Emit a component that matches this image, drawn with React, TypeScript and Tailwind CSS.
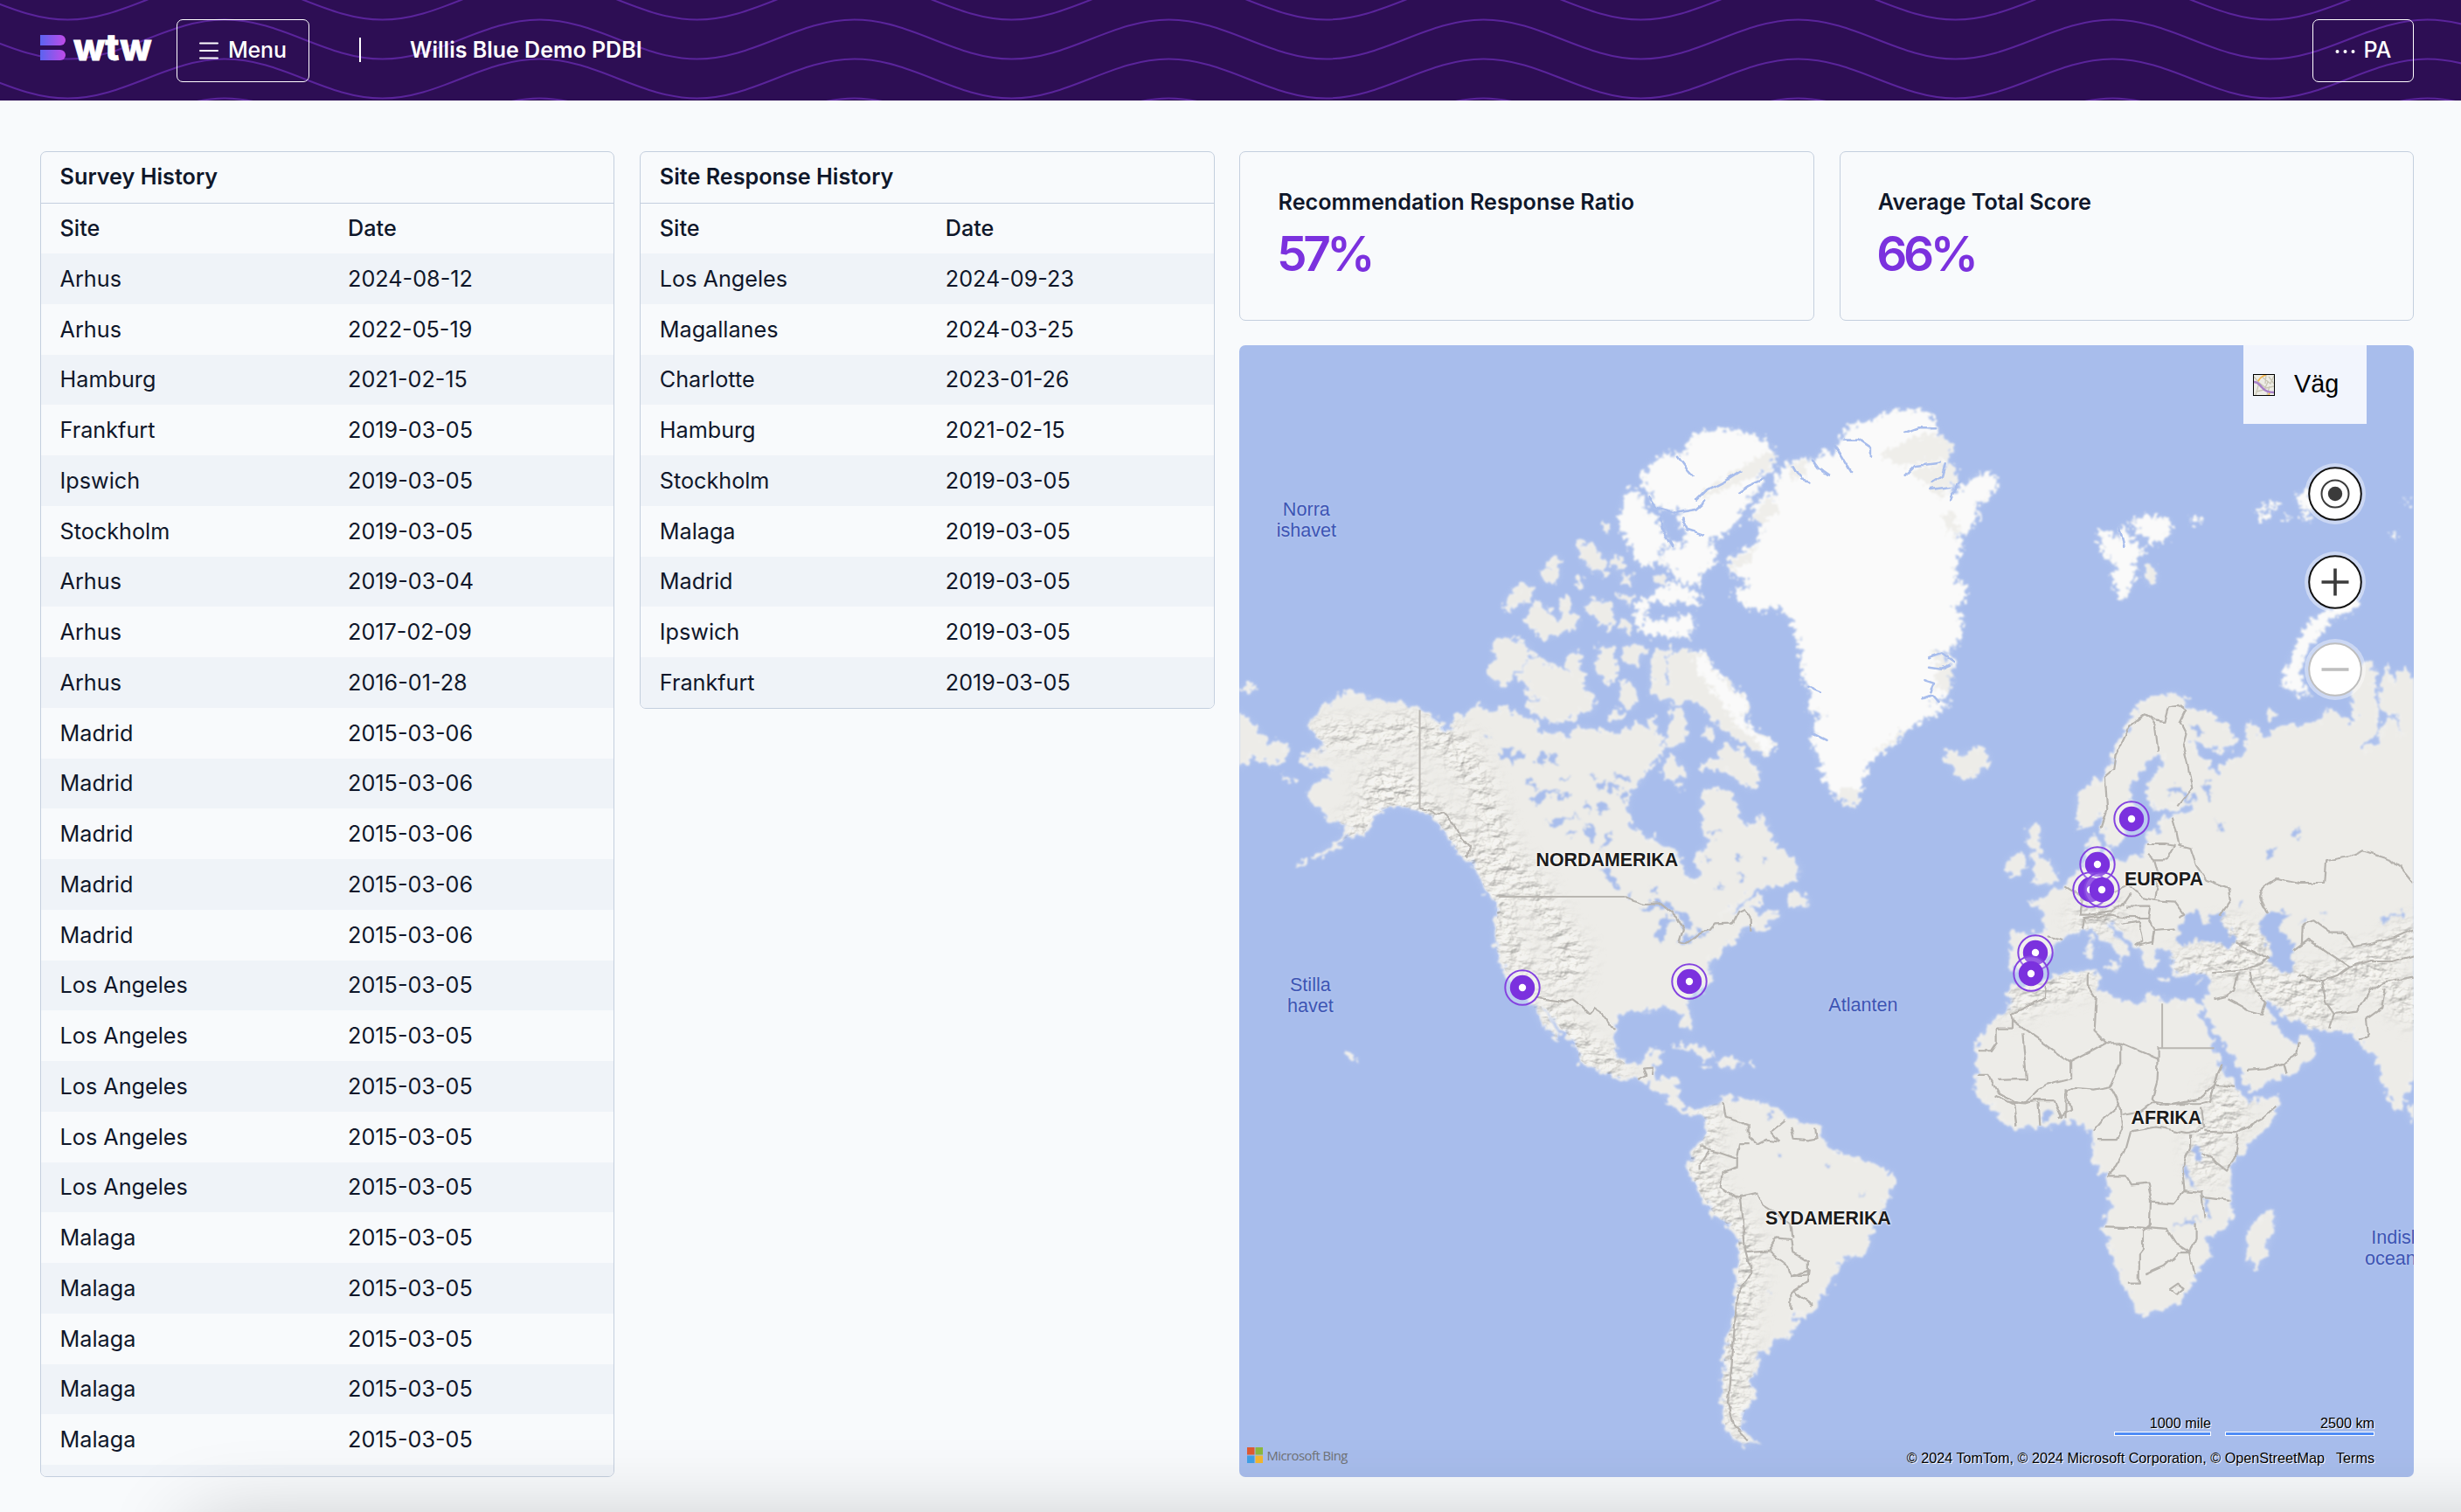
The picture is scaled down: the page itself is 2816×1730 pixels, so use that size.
import { useId, type ReactNode } from "react";

/* ---------- data ---------- */

type Row = [site: string, date: string];

const surveys: Row[] = [
  ["Arhus", "2024-08-12"],
  ["Arhus", "2022-05-19"],
  ["Hamburg", "2021-02-15"],
  ["Frankfurt", "2019-03-05"],
  ["Ipswich", "2019-03-05"],
  ["Stockholm", "2019-03-05"],
  ["Arhus", "2019-03-04"],
  ["Arhus", "2017-02-09"],
  ["Arhus", "2016-01-28"],
  ["Madrid", "2015-03-06"],
  ["Madrid", "2015-03-06"],
  ["Madrid", "2015-03-06"],
  ["Madrid", "2015-03-06"],
  ["Madrid", "2015-03-06"],
  ["Los Angeles", "2015-03-05"],
  ["Los Angeles", "2015-03-05"],
  ["Los Angeles", "2015-03-05"],
  ["Los Angeles", "2015-03-05"],
  ["Los Angeles", "2015-03-05"],
  ["Malaga", "2015-03-05"],
  ["Malaga", "2015-03-05"],
  ["Malaga", "2015-03-05"],
  ["Malaga", "2015-03-05"],
  ["Malaga", "2015-03-05"],
  ["", ""],
];

const responses: Row[] = [
  ["Los Angeles", "2024-09-23"],
  ["Magallanes", "2024-03-25"],
  ["Charlotte", "2023-01-26"],
  ["Hamburg", "2021-02-15"],
  ["Stockholm", "2019-03-05"],
  ["Malaga", "2019-03-05"],
  ["Madrid", "2019-03-05"],
  ["Ipswich", "2019-03-05"],
  ["Frankfurt", "2019-03-05"],
];

/* ---------- map geometry ---------- */

// Each sheet is a survey grid with its own origin and scale.
type Sheet = [ox: number, oy: number, sx: number, sy: number];
const ARCTIC: Sheet = [-18, -15, 2.24, 2.613];
const NORDIC: Sheet = [682, -15, 2.19, 2.613];
const NORTH: Sheet = [-18, 385, 2.24, 3];
const EAST: Sheet = [682, 385, 2.19, 3];
const SOUTH: Sheet = [382, 805, 1.543, 2.958];

function pts(sheet: Sheet, list: string) {
  return list
    .trim()
    .split(/\s+/)
    .map((pair) => {
      const [x, y] = pair.split(",").map(Number);
      return `${(sheet[0] + x / sheet[2]).toFixed(1)},${(sheet[1] + y / sheet[3]).toFixed(1)}`;
    })
    .join(" ");
}

const mainland: string[] = [
  // North and Central America
  pts(
    NORTH,
    "215,145 235,120 250,110 262,75 290,55 320,40 345,40 375,55 420,70 455,75 503,97 530,115 555,140 572,180 582,170 580,140 600,125 630,105 650,85 655,68 668,95 690,108 715,95 745,100 760,120 790,130 805,145 800,165 815,180 850,175 870,180 875,200 890,190 890,165 920,160 965,170 1000,175 1010,185 1030,175 1045,150 1065,140 1075,155 1085,175 1090,145 1100,120 1110,150 1108,175 1120,190 1125,215 1120,240 1110,275 1085,300 1080,320 1065,350 1045,370 1038,400 1035,440 1038,485 1055,510 1065,528 1100,540 1130,570 1160,585 1170,600 1172,640 1190,665 1205,688 1222,665 1220,630 1210,605 1225,580 1245,560 1240,530 1228,500 1235,470 1228,430 1228,380 1245,370 1280,372 1310,400 1318,430 1320,470 1345,500 1365,490 1378,455 1392,480 1395,510 1412,545 1415,575 1440,590 1460,610 1478,640 1475,665 1455,685 1430,695 1395,705 1355,710 1335,740 1310,775 1270,805 1320,785 1350,745 1375,735 1380,755 1350,770 1360,790 1375,805 1395,795 1425,790 1425,810 1400,825 1385,850 1365,855 1360,830 1330,850 1310,870 1310,895 1290,905 1275,915 1268,935 1250,970 1243,940 1240,980 1250,1020 1240,1035 1215,1060 1195,1080 1185,1100 1190,1125 1200,1170 1200,1195 1190,1200 1180,1175 1172,1140 1165,1122 1130,1115 1110,1125 1085,1130 1055,1125 1025,1130 1005,1155 1002,1200 1000,1235 1005,1270 1020,1300 1035,1315 1065,1312 1080,1300 1090,1275 1120,1270 1118,1295 1105,1320 1100,1345 1110,1365 1160,1365 1165,1390 1160,1430 1165,1450 1185,1470 1205,1465 1232,1480 1240,1500 1220,1480 1205,1488 1180,1480 1150,1450 1135,1425 1110,1400 1080,1375 1055,1360 1000,1355 960,1330 925,1310 910,1290 910,1260 890,1220 865,1190 840,1150 825,1115 808,1100 835,1160 850,1195 862,1238 840,1205 820,1180 805,1140 785,1090 750,1040 730,1010 710,960 697,910 698,860 702,800 700,760 690,740 670,710 655,660 635,620 610,600 590,560 570,520 550,480 520,450 490,440 455,425 430,425 405,445 385,460 370,490 360,530 345,515 320,530 290,570 240,600 230,600 280,560 310,530 325,500 300,485 270,480 262,450 240,430 222,410 216,385 240,350 270,330 280,300 270,290 235,298 200,265 210,245 240,235 270,235 250,200 230,175"
  ),
  // Chukotka
  pts(NORTH, "20,95 40,105 75,145 100,190 115,220 140,205 165,225 165,250 145,265 130,290 105,270 75,245 60,280 20,300"),
  // Europe and Asia
  pts(
    EAST,
    "760,80 800,55 850,40 885,60 870,85 900,100 940,110 975,150 1000,190 990,235 960,235 920,210 890,195 905,240 920,270 960,320 970,290 1000,270 1030,240 1035,200 1030,160 1045,140 1060,160 1055,190 1090,190 1100,165 1130,150 1170,150 1215,140 1225,100 1260,110 1300,150 1310,130 1295,70 1300,-20 1325,-70 1350,-50 1352,20 1355,70 1360,130 1360,180 1320,210 1330,230 1360,215 1370,180 1380,130 1400,125 1415,170 1428,180 1410,120 1370,95 1365,40 1375,-20 1385,-53 1395,0 1410,-30 1435,-40 1450,0 1470,0 1470,1360 1440,1360 1432,1420 1410,1475 1395,1440 1370,1370 1360,1290 1340,1275 1320,1245 1300,1200 1250,1200 1190,1190 1170,1165 1130,1150 1100,1110 1082,1085 1075,1100 1090,1150 1110,1190 1120,1220 1150,1245 1165,1240 1168,1210 1185,1225 1208,1250 1190,1300 1130,1350 1040,1405 1028,1375 1020,1330 990,1270 960,1200 935,1150 925,1120 935,1060 945,1010 900,1000 870,1010 845,980 840,925 820,915 800,915 805,950 795,990 775,975 770,940 755,910 735,880 715,850 700,830 680,820 690,850 720,890 735,935 715,960 720,930 690,900 665,880 645,850 620,850 600,860 570,880 545,900 530,950 510,990 480,1005 460,985 438,980 442,900 440,865 490,865 530,870 530,820 515,780 490,755 530,745 545,715 580,700 600,660 620,640 635,600 635,550 655,530 665,560 655,600 700,620 740,605 775,600 780,560 785,520 820,510 810,480 840,460 880,450 905,440 895,410 870,430 840,435 800,435 785,400 785,350 820,290 825,260 800,250 780,285 745,340 735,390 750,430 730,500 720,540 690,565 675,520 670,480 660,450 640,490 610,500 610,450 605,400 640,350 680,320 700,250 725,180 745,120"
  ),
  // Africa
  pts(EAST, "440,1060 450,1040 475,1050 530,1030 580,1000 650,990 660,1020 655,1060 700,1085 760,1115 790,1070 830,1095 900,1100 918,1115 910,1140 935,1200 955,1290 975,1350 1015,1410 1030,1440 1110,1425") +
    " " +
    pts(SOUTH, "1245,190 1235,240 1190,330 1160,400 1160,520 1165,570 1150,610 1115,640 1125,700 1105,740 1090,800 1060,870 1030,885 1005,900 990,880 990,840 965,780 955,700 938,610 950,530 945,440 920,380 918,310 925,280 910,275 880,240 830,265 785,270 760,240 735,190 712,140 715,60 712,0") +
    " " +
    pts(EAST, "355,1290 360,1230 390,1170 420,1150 440,1110 435,1070"),
  // South America
  pts(
    SOUTH,
    "228,215 245,190 262,178 272,160 280,175 295,175 330,180 355,200 370,225 400,255 435,265 440,310 460,355 480,360 530,390 565,425 565,470 545,530 525,620 520,685 470,720 455,790 440,820 425,890 400,900 385,890 395,935 375,980 350,980 350,1020 330,1025 325,1090 308,1130 322,1160 305,1220 295,1270 300,1300 325,1340 300,1340 270,1290 265,1200 265,1100 270,1000 285,900 290,800 295,700 290,620 250,560 225,490 205,410 210,350 225,320 240,270 232,240"
  ),
];

const islands: string[] = [
  pts(ARCTIC, "995,660 1020,680 1028,710 1010,718 998,690"),
  pts(ARCTIC, "905,635 930,628 960,660 980,690 978,725 950,710 925,690 915,655"),
  pts(ARCTIC, "835,690 850,668 868,685 850,700 862,715 850,750 820,740 815,715 835,712"),
  pts(ARCTIC, "715,825 740,775 770,752 792,765 785,800 760,810 740,830"),
  pts(ARCTIC, "775,875 780,850 800,810 835,830 850,865 870,860 865,800 880,800 890,840 910,850 905,885 870,890 840,910 812,910 800,885"),
  pts(ARCTIC, "925,820 960,800 995,820 1000,860 990,888 965,865 940,835"),
  pts(ARCTIC, "1015,780 1045,790 1045,820 1025,805"),
  pts(ARCTIC, "1020,855 1045,870 1045,905 1020,890"),
  pts(ARCTIC, "1020,732 1048,732 1045,750 1020,750"),
  pts(ARCTIC, "1110,730 1132,730 1130,755 1112,750"),
  pts(ARCTIC, "905,740 915,735 922,765 912,760"),
  pts(ARCTIC, "975,570 985,575 985,595 978,590"),
  pts(ARCTIC, "690,930 725,912 765,925 795,960 770,990 745,1020 735,1045 710,1062 680,1030 690,990 700,960"),
  pts(ARCTIC, "755,1030 780,985 805,975 840,995 865,1000 890,1030 880,980 905,950 918,970 910,1000 925,1060 955,1110 940,1140 915,1130 890,1160 850,1165 815,1155 780,1120 785,1100 830,1100 770,1080 790,1060"),
  pts(ARCTIC, "950,990 970,960 960,945 995,945 1000,980 1010,1010 990,1055 975,1030 955,1010"),
  pts(ARCTIC, "1030,940 1060,935 1080,945 1070,980 1055,995 1030,985 1025,960"),
  pts(ARCTIC, "1020,1050 1040,1045 1055,1080 1055,1120 1030,1130 1020,1090"),
  pts(ARCTIC, "990,1140 1010,1130 1020,1150 1010,1165 995,1160"),
  pts(ARCTIC, "1095,990 1110,955 1145,948 1135,980 1130,1020 1135,1055 1145,1050 1140,1000 1150,960 1180,950 1230,960 1250,1000 1290,1050 1340,1100 1345,1140 1310,1150 1350,1190 1410,1230 1395,1270 1350,1240 1310,1210 1270,1180 1240,1130 1200,1095 1160,1110 1120,1095 1095,1080 1100,1040"),
  pts(ARCTIC, "1270,1250 1290,1225 1330,1260 1365,1300 1370,1340 1355,1370 1320,1340 1285,1310 1225,1300 1245,1280 1280,1280"),
  pts(ARCTIC, "1145,1120 1180,1140 1185,1220 1160,1240 1130,1230 1150,1170"),
  pts(ARCTIC, "1145,1265 1175,1300 1190,1325 1160,1335 1125,1320 1135,1290"),
  pts(ARCTIC, "1240,1180 1258,1190 1250,1215 1235,1205"),
  pts(ARCTIC, "1160,1355 1178,1350 1172,1370"),
  pts(ARCTIC, "40,1072 65,1050 85,1062 65,1075"),
  pts(NORTH, "662,698 690,712 708,745 685,735"),
  pts(NORTH, "1450,760 1465,710 1475,730 1500,745 1500,770 1450,770"),
  pts(NORTH, "188,632 215,612 205,628"),
  pts(NORTH, "345,520 370,505 365,525"),
  pts(NORTH, "148,325 185,335 175,345"),
  pts(NORTH, "318,1270 335,1290 342,1305 330,1302"),
  pts(NORTH, "1160,1250 1200,1243 1240,1272 1265,1290 1230,1290 1200,1258"),
  pts(NORTH, "1265,1312 1285,1292 1330,1310 1300,1328"),
  pts(NORTH, "1222,1318 1245,1318 1240,1326"),
  pts(NORTH, "1348,1315 1365,1315 1362,1323"),
  pts(NORDIC, "275,1245 300,1265 330,1258 370,1245 388,1280 370,1310 330,1335 295,1325 305,1300 280,1285"),
  pts(NORDIC, "780,690 805,720 800,755 780,745"),
  pts(NORDIC, "1085,1140 1095,1130 1100,1145 1090,1155"),
  pts(EAST, "480,505 510,490 515,530 505,560 520,600 550,640 555,670 545,695 495,690 510,660 495,650 505,610 490,570"),
  pts(EAST, "430,620 455,590 478,600 470,650 435,670"),
  pts(EAST, "682,975 712,968 705,992"),
  pts(EAST, "636,912 648,912 645,950 636,945"),
  pts(EAST, "637,872 646,880 642,902"),
  pts(EAST, "805,1018 840,1022 840,1028 808,1024"),
  pts(EAST, "902,1032 920,1025 912,1036"),
  pts(EAST, "672,582 690,575 690,600 675,600"),
  pts(EAST, "1440,1445 1455,1480 1440,1500"),
  pts(SOUTH, "1232,540 1240,580 1225,680 1210,740 1192,725 1190,680 1195,600 1215,580"),
  pts(SOUTH, "1475,205 1490,200 1490,245 1480,245"),
];

const iceCaps: string[] = [
  // Greenland
  pts(ARCTIC, "1350,555 1370,510 1400,480 1420,500 1420,430 1450,390 1495,375 1512,400 1540,350") +
    " " +
    pts(
      NORDIC,
      "0,375 10,330 30,290 60,275 100,265 130,240 180,232 235,240 250,280 260,310 298,345 280,380 270,395 300,400 300,440 280,490 330,460 350,430 385,422 410,455 380,500 345,520 360,550 330,600 290,605 320,620 305,680 298,740 330,760 320,800 295,830 320,860 310,920 290,950 240,960 300,980 285,1020 290,1060 280,1085 225,1108 290,1108 245,1145 180,1185 150,1230 110,1260 80,1290 75,1330 60,1370 50,1425 20,1400 0,1385"
    ) +
    " " +
    pts(ARCTIC, "1540,1340 1530,1280 1510,1230 1515,1170 1545,1140 1500,1130 1510,1080 1490,1040 1480,960 1470,900 1450,850 1420,820 1370,830 1335,815 1305,775 1345,765 1345,745 1310,725 1290,690 1330,655 1370,635 1380,575"),
  // Ellesmere
  pts(ARCTIC, "1070,430 1100,390 1145,360 1180,370 1200,315 1240,295 1300,290 1350,305 1390,325 1415,370 1405,410 1370,430 1380,455 1350,490 1330,530 1310,580 1270,610 1240,620 1260,650 1260,690 1225,720 1220,755 1190,750 1160,740 1150,710 1120,690 1130,650 1150,640 1190,640 1180,590 1165,555 1200,530 1140,530 1105,510 1090,470 1075,445"),
  pts(ARCTIC, "1045,468 1070,490 1080,530 1110,560 1125,590 1140,630 1115,650 1120,680 1080,700 1055,680 1045,640 1025,600 1015,560 1025,510 1035,480"),
  pts(ARCTIC, "1085,800 1110,770 1150,755 1190,765 1222,790 1215,815 1180,805 1130,810"),
  pts(ARCTIC, "1055,800 1085,805 1090,825 1075,835 1085,860 1130,865 1160,850 1200,848 1208,880 1195,910 1130,905 1075,900 1060,860"),
  // Eastern Baffin
  pts(ARCTIC, "1210,960 1232,962 1252,1002 1292,1052 1342,1102 1345,1140 1320,1140 1358,1190 1412,1232 1395,1262 1360,1215 1312,1165 1282,1110 1240,1050 1215,1010"),
  // Svalbard
  pts(NORDIC, "660,600 690,600 705,620 725,570 740,620 775,655 750,680 745,740 725,800 705,770 695,730 710,700 675,670"),
  pts(NORDIC, "745,560 790,550 840,565 840,600 805,630 770,610 755,590"),
  pts(NORDIC, "890,565 905,550 915,560 900,570"),
  // Novaya Zemlya
  pts(NORDIC, "1315,790 1300,830 1240,860 1210,910 1180,960 1160,1010 1185,1085 1160,1085 1120,1045 1140,990 1160,930 1190,860 1240,830"),
  // Franz Josef Land
  pts(NORDIC, "1050,525 1080,520 1070,535"),
  pts(NORDIC, "1090,510 1115,515 1105,530 1092,525"),
  pts(NORDIC, "1065,545 1090,545 1080,560 1068,558"),
  pts(NORDIC, "1125,550 1142,552 1135,560"),
  pts(NORDIC, "1155,490 1190,470 1190,530 1165,515"),
  pts(NORDIC, "1172,545 1195,545 1190,562 1175,560"),
  pts(NORDIC, "1395,605 1410,608 1402,618"),
  pts(NORDIC, "1428,500 1440,505 1432,515"),
];

// Ice-free ground along glaciated coasts
const tundra: string[] = [
  pts(ARCTIC, "1240,470 1330,400 1415,350 1410,400 1330,450 1250,490 1215,500"),
  pts(ARCTIC, "1355,555 1400,490 1430,540 1400,560 1375,575"),
  pts(ARCTIC, "1295,690 1370,640 1340,690 1310,715"),
  pts(ARCTIC, "1450,400 1500,380 1490,430 1460,440"),
  pts(NORDIC, "110,370 180,320 250,300 298,345 280,380 200,395 170,400"),
  pts(NORDIC, "190,420 250,390 300,400 300,440 260,500 240,470"),
  pts(NORDIC, "270,540 300,540 310,600 285,600"),
  pts(NORDIC, "250,960 290,980 290,1085 250,1060"),
  pts(NORDIC, "0,1385 30,1360 60,1370 50,1425"),
  pts(NORDIC, "110,1240 180,1180 160,1215 100,1260"),
];

// Narrow fjords and straits
const fjords: string[] = [
  pts(ARCTIC, "1215,500 1240,470 1290,440 1325,415"),
  pts(ARCTIC, "1320,480 1345,460 1385,440"),
  pts(ARCTIC, "1090,490 1110,525 1160,540 1210,530 1235,505"),
  pts(ARCTIC, "1165,370 1190,410 1205,430"),
  pts(ARCTIC, "1120,550 1125,590 1150,640"),
  pts(ARCTIC, "1175,555 1190,590 1230,605"),
  pts(ARCTIC, "1460,400 1480,440 1500,445"),
  pts(ARCTIC, "1510,385 1525,410 1550,430"),
  pts(NORDIC, "20,320 60,320 90,345 90,370"),
  pts(NORDIC, "0,340 25,390 40,420"),
  pts(NORDIC, "175,300 210,285 255,285"),
  pts(NORDIC, "175,430 200,400 265,390"),
  pts(NORDIC, "245,450 270,430 278,395"),
  pts(NORDIC, "240,470 290,462"),
  pts(NORDIC, "290,500 305,455 320,440"),
  pts(NORDIC, "235,975 270,960 300,985"),
  pts(NORDIC, "235,1000 265,1005 285,995"),
  pts(NORDIC, "225,1040 250,1050 240,1075"),
  pts(NORDIC, "220,1095 245,1085 260,1105"),
  pts(NORDIC, "710,585 722,640"),
  pts(ARCTIC, "1500,1060 1530,1075"),
  pts(ARCTIC, "1510,1200 1545,1220"),
];

const waters: string[] = [
  // Great lakes
  pts(NORTH, "1070,792 1090,762 1120,745 1150,770 1155,790 1130,775 1100,785"),
  pts(NORTH, "1118,822 1135,808 1150,815 1132,850 1128,895 1118,900 1112,860"),
  pts(NORTH, "1155,790 1180,800 1205,830 1198,845 1182,830 1176,850 1165,810"),
  pts(NORTH, "1165,900 1180,880 1215,865 1218,875 1185,900"),
  pts(NORTH, "1215,858 1245,848 1248,858 1218,866"),
  // Canadian lakes
  pts(NORTH, "962,640 985,645 1015,690 1005,710 985,680"),
  pts(NORTH, "705,245 735,225 745,245 770,235 772,265 750,262 740,282 725,260 708,270"),
  pts(NORTH, "780,400 830,380 850,360 862,372 835,390 820,412 790,418"),
  pts(NORTH, "765,335 785,340 810,365 795,360"),
  pts(NORTH, "830,485 860,460 915,465 880,472 850,488"),
  pts(NORTH, "925,475 945,500 952,550 938,545"),
  pts(NORTH, "1000,510 985,560 965,570 980,530"),
  pts(NORTH, "870,330 895,318 880,340 860,345"),
  pts(NORTH, "850,385 885,382 880,398 860,400"),
  pts(NORTH, "830,245 845,250 860,285 845,280"),
  pts(NORTH, "800,262 815,240 830,270 810,285"),
  pts(NORTH, "665,185 690,182 682,198"),
  pts(NORTH, "880,525 900,512 908,520 892,535"),
  pts(NORTH, "960,345 985,335 975,370 960,380"),
  pts(NORTH, "990,350 1015,360 1010,375 992,370"),
  pts(NORTH, "925,405 942,425 945,455 930,430"),
  pts(NORTH, "955,430 980,420 985,440 965,445"),
  pts(NORTH, "1000,320 1030,325 1040,340 1012,338"),
  pts(NORTH, "935,325 955,320 945,338"),
  pts(NORTH, "1020,380 1035,395 1030,420 1018,400"),
  pts(NORTH, "1312,600 1330,592 1338,612 1322,618"),
  pts(NORTH, "1370,605 1395,600 1388,620"),
  pts(NORTH, "1328,655 1338,660 1335,690 1328,680"),
  pts(NORTH, "1235,605 1252,612 1240,630"),
  pts(NORTH, "1268,690 1280,680 1272,710"),
  pts(NORTH, "1095,710 1110,712 1105,735"),
  pts(NORTH, "1240,520 1275,515 1255,535"),
  pts(NORTH, "1030,730 1050,728 1045,740"),
  // Black Sea, Azov, Caspian
  pts(EAST, "855,890 870,830 880,795 905,790 925,808 925,835 945,820 930,800 975,795 965,830 985,855 1005,895 985,910 935,892 900,892 870,908"),
  pts(EAST, "1070,820 1095,790 1138,790 1135,815 1115,840 1120,870 1145,890 1150,920 1140,935 1145,960 1148,1000 1120,1000 1095,985 1095,950 1085,900 1070,870"),
  pts(EAST, "1365,835 1375,798 1430,793 1425,800 1385,805"),
  pts(EAST, "1165,820 1180,815 1175,830"),
  pts(EAST, "925,330 935,350 945,395 940,410 925,370"),
  pts(EAST, "955,475 975,490 975,510 962,500"),
  pts(EAST, "1085,570 1108,565 1095,600 1082,598"),
  pts(EAST, "1155,500 1165,510 1158,538 1148,530"),
  pts(EAST, "1015,755 1025,745 1018,778 1010,775"),
  pts(EAST, "1210,790 1232,795 1220,808"),
  pts(EAST, "830,370 855,350 870,375 905,405 895,415 860,380 840,392"),
  pts(EAST, "888,150 915,160 925,185 900,180"),
  // African lakes
  pts(SOUTH, "1095,338 1112,338 1112,378 1096,380"),
  pts(SOUTH, "1078,390 1086,392 1090,440 1100,470 1088,465 1078,420"),
  pts(SOUTH, "1114,490 1121,500 1125,580 1117,560"),
  pts(SOUTH, "1060,600 1085,575 1110,578 1085,590"),
  pts(SOUTH, "832,215 848,210 842,240 832,240"),
  pts(SOUTH, "345,220 352,225 348,240"),
  pts(SOUTH, "358,355 372,360 370,372"),
  pts(SOUTH, "445,385 456,400 452,412"),
  pts(SOUTH, "505,498 518,480 515,495"),
  pts(SOUTH, "340,820 352,828 346,835"),
];

const borders: string[] = [
  pts(NORTH, "503,435 525,440 545,460 565,450 590,490 610,540 632,570 625,600"),
  pts(NORTH, "1030,738 1050,750 1080,762 1120,760 1160,805 1178,850 1168,895 1185,900 1215,870 1245,855 1260,832 1305,830 1320,790 1335,780 1350,810 1352,860"),
  pts(NORTH, "800,1085 870,1098 895,1090 920,1115 938,1140 950,1122 970,1140 985,1180 1005,1190"),
  pts(NORTH, "1065,1365 1085,1350 1078,1328 1100,1325 1098,1350"),
  pts(EAST, "665,500 680,440 675,330 700,300 705,250 740,150 775,115 800,130 825,135 835,85 860,80 880,100 865,140 880,180 872,220 885,290 895,370 860,430"),
  pts(EAST, "780,115 802,150 810,240"),
  pts(EAST, "845,460 855,510 862,560 890,570 905,630 930,680 985,710 990,750 965,800"),
  pts(EAST, "780,555 830,555 850,560 830,610 800,610 785,590"),
  pts(EAST, "800,610 810,660 800,750 770,740 735,700 700,720"),
  pts(EAST, "800,750 850,755 875,800 860,810"),
  pts(EAST, "575,700 620,740 615,800 640,800 690,790 725,760 740,730"),
  pts(EAST, "620,850 625,810 690,800 730,810 785,810 790,770 730,770"),
  pts(EAST, "720,830 760,820 770,890 755,905 795,890 800,855 855,850"),
  pts(EAST, "785,810 800,855 795,900"),
  pts(EAST, "530,870 570,885"),
  pts(EAST, "1005,895 1040,920 1085,950 1070,970 1040,985 945,1000"),
  pts(EAST, "1085,795 1065,740 1075,705 1110,675 1165,690 1225,690 1230,615 1290,600 1325,580 1395,610 1420,640 1450,690"),
  pts(EAST, "1170,900 1172,830 1200,820 1240,860 1275,860 1300,910 1340,900 1400,880 1450,850"),
  pts(EAST, "1150,920 1185,885 1220,915 1290,980 1260,1010 1220,1030 1160,1010"),
  pts(EAST, "1290,980 1340,960 1400,960 1450,940"),
  pts(EAST, "1220,1030 1230,1100 1250,1140 1240,1190"),
  pts(EAST, "1250,1140 1310,1130 1340,1060 1380,1030 1450,1010"),
  pts(EAST, "1380,1050 1370,1120 1330,1160 1335,1220 1310,1225"),
  pts(EAST, "1010,1000 1000,1060 980,1080 950,1090"),
  pts(EAST, "1040,995 1050,1060 1080,1100 1070,1140 1040,1130 985,1090"),
  pts(EAST, "1030,1335 1080,1330 1125,1310 1160,1280 1165,1240"),
  pts(EAST, "1125,1310 1132,1345"),
  pts(EAST, "635,995 635,1040 655,1080 650,1200 680,1240 715,1240 810,1295 810,1255"),
  pts(EAST, "530,1040 528,1085 440,1140 445,1165 590,1305 640,1270 680,1240"),
  pts(EAST, "445,1165 445,1190 405,1190 405,1240 390,1270 357,1270"),
  pts(EAST, "470,1210 480,1365 410,1368"),
  pts(EAST, "590,1305 590,1360 545,1375 510,1400 475,1445"),
  pts(EAST, "715,1240 715,1310 690,1390 650,1400 600,1395 580,1410"),
  pts(EAST, "810,1295 808,1370 795,1430 810,1455 870,1450 915,1450 940,1440 960,1340 970,1310"),
  pts(EAST, "357,1350 385,1350 410,1410 450,1440 475,1445 505,1440"),
  pts(EAST, "580,1410 590,1470 560,1500"),
  pts(SOUTH, "770,180 800,185 815,175 850,175 865,240"),
  pts(SOUTH, "825,260 822,180"),
  pts(SOUTH, "785,265 780,190 745,155"),
  pts(SOUTH, "870,140 870,235"),
  pts(SOUTH, "950,135 965,190 935,240 920,275"),
  pts(SOUTH, "965,190 970,270 960,305 925,305"),
  pts(SOUTH, "970,225 1000,215 1025,180 1060,190 1105,170 1135,120 1170,130"),
  pts(SOUTH, "985,280 1030,265 1085,285 1115,270 1110,200"),
  pts(SOUTH, "985,280 975,350 960,400 945,430 975,430 985,460 1015,455 1022,520 1060,525 1080,480 1075,400 1090,340 1090,290"),
  pts(SOUTH, "1115,280 1170,285 1215,240 1240,200"),
  pts(SOUTH, "1175,285 1168,370 1155,410 1112,350"),
  pts(SOUTH, "1022,520 1020,600 1008,620 1008,680 1000,700 1000,795 980,795"),
  pts(SOUTH, "938,605 1000,608 1050,615 1065,660 1090,690 1100,640 1100,590"),
  pts(SOUTH, "1010,765 1045,735 1070,690 1090,690 1098,760"),
  pts(SOUTH, "1080,480 1110,485 1115,570"),
  pts(SOUTH, "1110,500 1160,512"),
  pts(SOUTH, "1055,815 1070,795 1080,810 1065,830 1055,815"),
  pts(SOUTH, "265,180 270,230 310,255 310,300 325,325 340,310 365,315 350,280 375,240"),
  pts(SOUTH, "310,320 295,320 290,370 260,350 240,340 225,325"),
  pts(SOUTH, "240,345 225,390 225,410"),
  pts(SOUTH, "290,370 290,400 265,420 262,470 290,505 325,490 335,530 385,590 388,640"),
  pts(SOUTH, "295,505 300,600 305,690 345,685 360,640 385,645 388,690 415,720 415,765 385,770"),
  pts(SOUTH, "345,685 380,735 385,770 418,750 415,790 390,820 425,870"),
  pts(SOUTH, "385,885 385,830 390,820"),
  pts(SOUTH, "305,690 315,760 290,840 285,950 280,1080 275,1200 285,1280 310,1330"),
  pts(SOUTH, "385,260 390,310 415,315 430,310 428,265"),
];

// Borders that follow a meridian or a parallel
const straightBorders: string[] = [
  pts(NORTH, "503,97 503,435"),
  pts(NORTH, "706,738 1030,738"),
  pts(EAST, "820,1105 820,1258"),
  pts(EAST, "810,1258 950,1258"),
];

// Long ridges that carry the strongest hill shading
const ridges: string[] = [
  pts(NORTH, "330,520 385,430 440,400 500,425 560,480 620,560 660,640 710,740 720,860 760,980"),
  pts(NORTH, "380,350 440,320 480,350"),
  pts(NORTH, "600,260 650,330 680,460 720,600 800,720 850,850 900,930 890,1010 830,1000"),
  pts(NORTH, "830,1110 890,1200 940,1290 1010,1320"),
  pts(NORTH, "260,180 380,190 480,160 620,230"),
  pts(SOUTH, "240,230 230,340 225,420 260,540 300,620 310,720 300,850 290,1000 285,1180 295,1290"),
  pts(EAST, "620,820 660,800 700,810"),
  pts(EAST, "860,980 950,960 1040,990 1110,1060 1200,1130 1240,1140"),
  pts(EAST, "1160,1020 1240,1040 1300,980 1380,940 1440,870"),
  pts(EAST, "1300,960 1370,1020 1450,1130"),
  pts(EAST, "450,1110 520,1060 620,1020"),
  pts(EAST, "980,860 1060,910"),
  pts(SOUTH, "1140,150 1170,230 1110,300 1120,420"),
];

const pins: [x: number, y: number][] = [
  [324, 735],
  [515, 727.5],
  [1021, 542],
  [981.5, 594],
  [974, 623],
  [987, 623],
  [911, 695],
  [905.5, 719],
];

/* ---------- map ---------- */

function Landmass() {
  const id = useId().replace(/:/g, "");
  const coast = `coast${id}`;
  const frost = `frost${id}`;
  const soft = `soft${id}`;
  const relief = `relief${id}`;
  const wide = `wide${id}`;
  const clip = `clip${id}`;
  return (
    <svg className="absolute inset-0 size-full" viewBox="0 0 1344 1295">
      <defs>
        <filter id={coast} x="0" y="0" width="1344" height="1295" filterUnits="userSpaceOnUse">
          <feTurbulence type="fractalNoise" baseFrequency="0.11" numOctaves="3" seed="7" result="n" />
          <feDisplacementMap in="SourceGraphic" in2="n" scale="18" xChannelSelector="R" yChannelSelector="G" />
          <feGaussianBlur stdDeviation="0.8" />
        </filter>
        <filter id={frost} x="0" y="0" width="1344" height="1295" filterUnits="userSpaceOnUse">
          <feTurbulence type="fractalNoise" baseFrequency="0.17" numOctaves="3" seed="5" result="n" />
          <feDisplacementMap in="SourceGraphic" in2="n" scale="22" xChannelSelector="R" yChannelSelector="G" />
          <feGaussianBlur stdDeviation="0.9" />
        </filter>
        <filter id={soft} x="0" y="0" width="1344" height="1295" filterUnits="userSpaceOnUse">
          <feTurbulence type="fractalNoise" baseFrequency="0.06" numOctaves="2" seed="3" result="n" />
          <feDisplacementMap in="SourceGraphic" in2="n" scale="7" xChannelSelector="R" yChannelSelector="G" />
          <feGaussianBlur stdDeviation="0.5" />
        </filter>
        <filter id={relief} x="0" y="0" width="1344" height="1295" filterUnits="userSpaceOnUse" colorInterpolationFilters="sRGB">
          <feTurbulence type="fractalNoise" baseFrequency="0.07 0.1" numOctaves="4" seed="11" result="n" />
          <feDiffuseLighting in="n" surfaceScale="4" diffuseConstant="1.12" lightingColor="#f4f2ec" result="l">
            <feDistantLight azimuth="235" elevation="60" />
          </feDiffuseLighting>
          <feGaussianBlur in="SourceAlpha" stdDeviation="12" result="m" />
          <feComposite in="l" in2="m" operator="in" />
        </filter>
        <filter id={wide} x="-10%" y="-10%" width="120%" height="120%">
          <feGaussianBlur stdDeviation="5" />
        </filter>
        <clipPath id={clip}>
          {mainland.map((d, i) => (
            <polygon key={i} points={d} />
          ))}
        </clipPath>
      </defs>

      <g fill="#cfdcf5" opacity="0.4" filter={`url(#${wide})`}>
        {[...mainland, ...islands, ...iceCaps].map((d, i) => (
          <polygon key={i} points={d} />
        ))}
      </g>

      <g filter={`url(#${coast})`} fill="#edece8" stroke="#f1f0ed" strokeWidth="2" strokeLinejoin="round">
        {[...mainland, ...islands].map((d, i) => (
          <polygon key={i} points={d} />
        ))}
      </g>
      <g filter={`url(#${frost})`}>
        <g fill="#fafafa" stroke="#f6f6f4" strokeWidth="2" strokeLinejoin="round">
          {iceCaps.map((d, i) => (
            <polygon key={i} points={d} />
          ))}
        </g>
        <g fill="#ecebe5" opacity="0.75">
          {tundra.map((d, i) => (
            <polygon key={i} points={d} />
          ))}
        </g>
      </g>
      <g fill="none" stroke="#a8bdec" strokeWidth="2.6" strokeLinecap="round" strokeLinejoin="round" filter={`url(#${soft})`}>
        {fjords.map((d, i) => (
          <polyline key={i} points={d} />
        ))}
      </g>

      <g clipPath={`url(#${clip})`} opacity="0.6">
        <g fill="none" stroke="#000" strokeWidth="24" strokeLinecap="round" strokeLinejoin="round" filter={`url(#${relief})`}>
          {ridges.map((d, i) => (
            <polyline key={i} points={d} />
          ))}
        </g>
      </g>

      <g fill="#a8bdec" filter={`url(#${coast})`}>
        {waters.map((d, i) => (
          <polygon key={i} points={d} />
        ))}
      </g>

      <g fill="none" stroke="#b5b2ad" strokeWidth="2.2" strokeLinejoin="round" filter={`url(#${soft})`}>
        {borders.map((d, i) => (
          <polyline key={i} points={d} />
        ))}
      </g>
      <g fill="none" stroke="#b9b6b1" strokeWidth="2">
        {straightBorders.map((d, i) => (
          <polyline key={i} points={d} />
        ))}
      </g>
    </svg>
  );
}

function Pin({ x, y }: { x: number; y: number }) {
  return (
    <svg
      className="absolute size-[44px] -translate-x-1/2 -translate-y-1/2"
      style={{ left: x, top: y }}
      viewBox="-22 -22 44 44"
    >
      <circle r="19.7" fill="#ffffff" fillOpacity="0.22" stroke="#8443e0" strokeWidth="2" />
      <circle r="14.2" fill="#7b31de" />
      <circle r="4.2" fill="#fff" />
    </svg>
  );
}

function MapButton({ muted = false, children }: { muted?: boolean; children: ReactNode }) {
  return (
    <button className="flex size-[70px] items-center justify-center rounded-full bg-white/40">
      <svg
        className={muted ? "size-[62px] text-[#bfbfbf]" : "size-[62px] text-[#3b3b3b]"}
        viewBox="-31 -31 62 62"
        fill="none"
        stroke="currentColor"
      >
        <circle r="29.8" fill="#fff" stroke={muted ? "#bfbfbf" : "#111"} strokeWidth="2" />
        {children}
      </svg>
    </button>
  );
}

const seaLabel =
  "absolute -translate-x-1/2 -translate-y-1/2 text-center text-[21.6px] leading-[24px] text-[#3d55b4] [text-shadow:0_0_3px_#c5d3f3]";
const landLabel =
  "absolute -translate-x-1/2 -translate-y-1/2 text-[21.4px] font-bold leading-none text-[#1b1b1b] [text-shadow:0_0_3px_#fff,0_0_3px_#fff]";
const caption = "text-[16.2px] leading-none text-black [text-shadow:1px_1px_0_#fff]";

function WorldMap() {
  return (
    <section className="relative flex-1 overflow-hidden rounded-[7px] bg-[#a8bdec] font-['Liberation_Sans',Arial,sans-serif]">
      <Landmass />

      <span className={`${seaLabel} left-[76.5px] top-[200px]`}>Norra<br />ishavet</span>
      <span className={`${seaLabel} left-[81px] top-[744px]`}>Stilla<br />havet</span>
      <span className={`${seaLabel} left-[713.5px] top-[755px]`}>Atlanten</span>
      <span className={`${seaLabel} left-[1329px] top-[1033px]`}>Indiska<br />oceanen</span>
      <span className={`${landLabel} left-[420.5px] top-[590px]`}>NORDAMERIKA</span>
      <span className={`${landLabel} left-[1057.5px] top-[612px]`}>EUROPA</span>
      <span className={`${landLabel} left-[1060.5px] top-[885px]`}>AFRIKA</span>
      <span className={`${landLabel} left-[673.5px] top-[1000px]`}>SYDAMERIKA</span>

      {pins.map(([x, y]) => (
        <Pin key={`${x}-${y}`} x={x} y={y} />
      ))}

      <div className="absolute right-[54px] top-0 flex h-[90px] w-[141px] items-center gap-[22px] bg-[#f2f5fd] pl-[11px]">
        <svg className="size-[25px]" viewBox="0 0 25 25" fill="none">
          <rect width="25" height="25" fill="#edece6" />
          <path d="M3 24 7 10 1 3M7 10l8 6 9-2M10 3l10 8 4-9M15 1l-1 10M4 20l9-2 4-9M19 14l-3 10M18 3l6 8" stroke="#c9c5b4" strokeWidth="1.3" />
          <path d="M6 8C8 4 11 2 15 1M18 24l1-3" stroke="#f5b54a" strokeWidth="1.8" />
          <path d="M1 9c5 0 6 3 9 6 4 5 8 6 14 6" stroke="#a981c9" strokeWidth="2.6" />
          <rect x="0.5" y="0.5" width="24" height="24" stroke="#000" />
        </svg>
        <span className="-mt-[2px] text-[28.8px] leading-none text-black">Väg</span>
      </div>

      <div className="absolute right-[55px] top-[135px] flex flex-col gap-[30.5px]">
        <MapButton>
          <circle r="15.5" strokeWidth="2" />
          <circle r="8.2" fill="currentColor" stroke="none" />
        </MapButton>
        <MapButton>
          <path d="M-15.5 0h31M0-15.5v31" strokeWidth="3.6" />
        </MapButton>
        <MapButton muted>
          <path d="M-15.5 0h31" strokeWidth="3.6" />
        </MapButton>
      </div>

      <div className="absolute bottom-[16px] left-[9px] flex items-center gap-[4px] text-[#6f7276]">
        <svg className="size-[18px]" viewBox="0 0 18 18">
          <path fill="#de5a33" d="M0 0h8.5v8.5H0z" />
          <path fill="#8cb83e" d="M9.5 0H18v8.5H9.5z" />
          <path fill="#3f9fe6" d="M0 9.5h8.5V18H0z" />
          <path fill="#f3b72f" d="M9.5 9.5H18V18H9.5z" />
        </svg>
        <span className="font-['Open_Sans',sans-serif] text-[14.8px] font-medium leading-none tracking-[-0.5px]">Microsoft Bing</span>
      </div>

      <div className="absolute bottom-[14px] right-[45px] flex flex-col items-end gap-[17px]">
        <div className="flex gap-[16px]">
          <div className="flex w-[111px] flex-col items-end gap-[2px]">
            <span className={caption}>1000 mile</span>
            <span className="h-[5px] w-full border border-white bg-[#4f8cf6]" />
          </div>
          <div className="flex w-[171px] flex-col items-end gap-[2px]">
            <span className={caption}>2500 km</span>
            <span className="h-[5px] w-full border border-white bg-[#4f8cf6]" />
          </div>
        </div>
        <div className="flex gap-[13px] whitespace-nowrap">
          <span className={caption}>© 2024 TomTom, © 2024 Microsoft Corporation, © OpenStreetMap</span>
          <span className={caption}>Terms</span>
        </div>
      </div>
    </section>
  );
}

/* ---------- header ---------- */

function Waves() {
  // Half a wave spans 180px; the handle length keeps the curve close to a sine.
  const line = (y: number) => {
    let d = `M-282.5 ${y}`;
    for (let i = 0; i < 18; i++) {
      const x = -282.5 + i * 180;
      const a = i % 2 ? y - 45 : y;
      const b = i % 2 ? y : y - 45;
      d += ` C${x + 65.6} ${a} ${x + 114.4} ${b} ${x + 180} ${b}`;
    }
    return d;
  };
  return (
    <svg className="absolute inset-0 size-full" viewBox="0 0 2816 115" fill="none" stroke="#5a249b" strokeWidth="2">
      {[22.5, 67.5, 112.5, 157.5].map((y) => (
        <path key={y} d={line(y)} />
      ))}
    </svg>
  );
}

function Header() {
  return (
    <header className="relative h-[115px] shrink-0 overflow-hidden bg-[#2d0e54] text-white">
      <Waves />
      <div className="relative flex h-full items-start pl-[46px] pr-[54px] pt-[22px] text-[25px] leading-none">
        <svg className="mt-[16px] h-[34px] w-[130px] overflow-visible" viewBox="0 0 130 34">
          <defs>
            <linearGradient id="brand" x1="0" x2="1">
              <stop offset="0" stopColor="#5b63f0" />
              <stop offset="1" stopColor="#c04be8" />
            </linearGradient>
          </defs>
          <path fill="url(#brand)" d="M0 2h23a6 6 0 0 1 0 12H0z" />
          <path fill="url(#brand)" d="M0 19h23a6 6 0 0 1 0 12H0z" />
          <text
            x="38"
            y="30.5"
            fill="#fff"
            stroke="#fff"
            strokeWidth="0.8"
            className="font-['Inter',sans-serif] text-[41px] font-extrabold"
            textLength="89.5"
            lengthAdjust="spacingAndGlyphs"
          >
            wtw
          </text>
        </svg>
        <button className="ml-[26px] flex h-[72px] w-[152px] items-center rounded-[7px] border border-white pl-[25px] font-medium">
          <svg className="mr-[11px] h-[20px] w-[22px]" viewBox="0 0 22 20" stroke="#fff" strokeWidth="2" strokeLinecap="round">
            <path d="M1 1.5h20M1 10h20M1 18.5h20" />
          </svg>
          <span className="-mt-[1px] tracking-[-0.2px]">Menu</span>
        </button>
        <span className="ml-[57px] mt-[21px] h-[28px] w-[2px] bg-white" />
        <span className="ml-[56px] mt-[23px] font-semibold">Willis Blue Demo PDBI</span>
        <button className="ml-auto flex h-[72px] w-[116px] items-center rounded-[7px] border border-white pl-[25px] font-medium">
          <svg className="mr-[8.5px] mt-[1px] h-[6px] w-[24px]" viewBox="0 0 24 6" fill="#fff">
            <circle cx="2.5" cy="3" r="2" />
            <circle cx="11.5" cy="3" r="2" />
            <circle cx="20.5" cy="3" r="2" />
          </svg>
          <span className="-mt-[1px] tracking-[-0.2px]">PA</span>
        </button>
      </div>
    </header>
  );
}

/* ---------- cards ---------- */

function HistoryTable({ title, rows, dateOffset, full }: { title: string; rows: Row[]; dateOffset: number; full?: boolean }) {
  return (
    <section
      className={`flex w-[657.4px] shrink-0 flex-col overflow-hidden rounded-[7px] border border-[#c4cfde] text-[25.2px] leading-none ${
        full ? "h-[1517px]" : "self-start"
      }`}
    >
      <h2 className="flex h-[58.5px] shrink-0 items-center border-b border-[#c4cfde] pl-[21.6px] font-semibold">{title}</h2>
      <div className="flex h-[57.5px] shrink-0 items-center pl-[21.6px] font-medium">
        <span className="shrink-0" style={{ width: dateOffset }}>Site</span>
        <span>Date</span>
      </div>
      {rows.map(([site, date], i) => (
        <div
          key={i}
          className={`flex h-[57.75px] shrink-0 items-center pl-[21.6px] pt-px ${i % 2 ? "" : "bg-[#eff3f8]"}`}
        >
          <span className="shrink-0" style={{ width: dateOffset }}>{site}</span>
          <span>{date}</span>
        </div>
      ))}
    </section>
  );
}

function Stat({ label, value }: { label: string; value: string }) {
  return (
    <section className="flex h-[194px] flex-1 flex-col rounded-[7px] border border-[#c4cfde] pl-[43.2px] pt-[43px]">
      <h2 className="text-[25.2px] font-semibold leading-[28px]">{label}</h2>
      <p className="-ml-[1.5px] mt-[14px] text-[55px] font-semibold leading-[62px] tracking-[-4.5px] text-[#7b31de]">{value}</p>
    </section>
  );
}

export default function App() {
  return (
    <div className="relative flex h-[1730px] w-[2816px] flex-col overflow-hidden bg-[#f8fafc] font-['Inter',sans-serif] text-[#0f172a]">
      <Header />
      <main className="flex h-[1575px] gap-[28.8px] pl-[46px] pr-[54px] pt-[58px]">
        <HistoryTable title="Survey History" rows={surveys} dateOffset={329.5} full />
        <HistoryTable title="Site Response History" rows={responses} dateOffset={327} />
        <div className="flex h-[1517px] flex-1 flex-col gap-[28px]">
          <div className="flex gap-[28.8px]">
            <Stat label="Recommendation Response Ratio" value="57%" />
            <Stat label="Average Total Score" value="66%" />
          </div>
          <WorldMap />
        </div>
      </main>
      <div className="pointer-events-none absolute left-[220px] right-[-200px] top-[1748px] h-[100px] shadow-[0_0_100px_rgba(0,0,0,0.24)]" />
    </div>
  );
}
